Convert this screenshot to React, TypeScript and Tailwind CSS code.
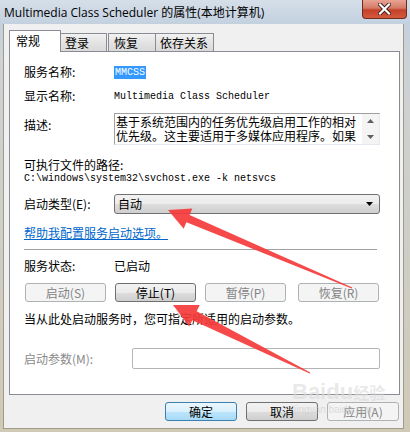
import React from 'react';

const cjk = { fontFamily: '"Noto Sans CJK SC", "Liberation Sans", sans-serif' };
const mono = { fontFamily: '"Liberation Mono", "Noto Sans CJK SC", monospace' };

const Btn: React.FC<{ label: string; disabled?: boolean; focused?: boolean; w?: string }> = ({ label, disabled, focused, w = 'w-[81px]' }) => {
  if (disabled) {
    return (
      <div className={`${w} h-[19px] rounded-[3px] border border-[#adb2b5] bg-[#f4f4f4] text-[#838383] text-[12px] leading-[17px] flex items-center justify-center`}>
        {label}
      </div>
    );
  }
  return (
    <div
      className={`${w} h-[19px] rounded-[3px] border ${focused ? 'border-[#3c7fb1]' : 'border-[#707070]'} text-[12px] leading-[17px] text-black flex items-center justify-center ${
        focused
          ? 'bg-[linear-gradient(#eaf6fd_0%,#d9f0fc_50%,#bee6fd_51%,#a7d9f5_100%)]'
          : 'bg-[linear-gradient(#f2f2f2_0%,#ebebeb_50%,#dddddd_51%,#cfcfcf_100%)]'
      }`}
    >
      {label}
    </div>
  );
};

export default function App() {
  return (
    <div className="relative w-[410px] h-[432px] overflow-hidden bg-[linear-gradient(#d5dfea,#c3d0de_24px,#cdd2d6_60px,#cfc9b6)]" style={cjk}>
      {/* Title bar */}
      <div className="h-[24px] flex items-start justify-between">
        <div className="pl-[4px] pt-[5px] text-[12px] leading-[16px] text-black" style={{ fontFamily: '"Open Sans", "Noto Sans CJK SC", sans-serif' }}>
          Multimedia Class Scheduler 的属性(本地计算机)
        </div>
        <div className="mr-[3px] w-[45px] h-[19px] rounded-b-[4px] border border-t-0 border-[#6d2c22] bg-[linear-gradient(#e8a494_0%,#d57a66_45%,#c4412a_55%,#d4583e_100%)] flex items-center justify-center">
          <svg width="13" height="12" viewBox="0 0 13 12">
            <path d="M2 1.5 L11 10.5 M11 1.5 L2 10.5" stroke="#3b1d19" strokeWidth="4" strokeLinecap="square" />
            <path d="M2 1.5 L11 10.5 M11 1.5 L2 10.5" stroke="#ffffff" strokeWidth="2.2" strokeLinecap="square" />
          </svg>
        </div>
      </div>

      {/* Window body */}
      <div className="ml-[3px] w-[401px] h-[405px] border-l border-r border-b border-[#a09a88] bg-[#f0f0f0] pl-[5px] pt-[7px] flex flex-col">
        {/* Tabs */}
        <div className="flex items-end h-[20px] relative z-10">
          <div className="w-[52px] h-[22px] -mb-[1px] bg-white border border-b-0 border-[#898c95] text-[12px] leading-[20px] pl-[6px]">常规</div>
          <div className="w-[46px] h-[18px] border border-b-0 border-l-0 border-[#898c95] bg-[linear-gradient(#f2f2f2,#e3e3e3_50%,#d9d9d9)] text-[12px] leading-[17px] pl-[4px]">登录</div>
          <div className="w-[48px] h-[18px] ml-[1px] border border-b-0 border-[#898c95] bg-[linear-gradient(#f2f2f2,#e3e3e3_50%,#d9d9d9)] text-[12px] leading-[17px] pl-[5px]">恢复</div>
          <div className="w-[58px] h-[18px] border border-b-0 border-l-0 border-[#898c95] bg-[linear-gradient(#f2f2f2,#e3e3e3_50%,#d9d9d9)] text-[12px] leading-[17px] pl-[4px]">依存关系</div>
        </div>

        {/* Panel */}
        <div className="w-[391px] h-[344px] bg-white border border-[#898c95] pl-[14px] flex flex-col text-[12px] text-black">
          <div className="mt-[12px] h-[16px] flex items-center">
            <span className="w-[90px] leading-[14px]">服务名称:</span>
            <span className="px-[1px] bg-[#3399ff] text-white text-[10px] leading-[13px]" style={mono}>MMCSS</span>
          </div>
          <div className="mt-[8px] h-[16px] flex items-center">
            <span className="w-[90px] leading-[14px]">显示名称:</span>
            <span className="text-[10px] leading-[13px]" style={mono}>Multimedia Class Scheduler</span>
          </div>
          <div className="mt-[9px] h-[32px] flex items-center">
            <span className="w-[90px] leading-[14px] pb-[8px]">描述:</span>
            <div className="w-[266px] h-[32px] border border-[#a0a0a0] border-r-[#e3e9ef] border-b-[#e3e9ef] flex">
              <div className="w-[247px] pl-[1px] pt-[1px] text-[12px] leading-[14px]">
                <div>基于系统范围内的任务优先级启用工作的相对</div>
                <div>优先级。这主要适用于多媒体应用程序。如果</div>
              </div>
              <div className="w-[17px] h-full bg-[#f4f4f4] flex flex-col items-center justify-between py-[5px]">
                <svg width="7" height="4" viewBox="0 0 7 4"><path d="M0 4 L3.5 0 L7 4 Z" fill="#606060" /></svg>
                <svg width="7" height="4" viewBox="0 0 7 4"><path d="M0 0 L3.5 4 L7 0 Z" fill="#606060" /></svg>
              </div>
            </div>
          </div>
          <div className="mt-[13px] h-[13px] leading-[13px]">可执行文件的路径:</div>
          <div className="mt-[1px] h-[13px] leading-[13px] text-[10px]" style={mono}>C:\windows\system32\svchost.exe -k netsvcs</div>
          <div className="mt-[9px] h-[20px] flex items-center">
            <span className="w-[90px] leading-[14px]">启动类型(E):</span>
            <div className="w-[266px] h-[20px] rounded-[3px] border border-[#707070] bg-[linear-gradient(#f2f2f2_0%,#ebebeb_50%,#dddddd_51%,#cfcfcf_100%)] flex items-center justify-between pl-[3px] pr-[6px]">
              <span className="leading-[14px]">自动</span>
              <svg width="7" height="4" viewBox="0 0 7 4"><path d="M0 0 L7 0 L3.5 4 Z" fill="#000" /></svg>
            </div>
          </div>
          <div className="mt-[12px] h-[14px] leading-[14px]">
            <span className="text-[#0066cc] underline">帮助我配置服务启动选项。</span>
          </div>
          <div className="mt-[9px] w-[353px] h-[1px] bg-[#a0a0a0]" />
          <div className="mt-[9px] h-[14px] flex items-center">
            <span className="w-[90px] leading-[14px]">服务状态:</span>
            <span className="leading-[14px]">已启动</span>
          </div>
          <div className="mt-[10px] flex items-center gap-[9px] pl-[1px]">
            <Btn label="启动(S)" disabled />
            <Btn label="停止(T)" />
            <Btn label="暂停(P)" disabled />
            <div className="ml-[3px]"><Btn label="恢复(R)" disabled /></div>
          </div>
          <div className="mt-[10px] h-[14px] leading-[14px]">当从此处启动服务时，您可指定所适用的启动参数。</div>
          <div className="mt-[22px] h-[21px] flex items-center">
            <span className="w-[108px] leading-[14px] text-[#8a8a8a]">启动参数(M):</span>
            <div className="w-[248px] h-[21px] border border-[#b5b5b5] rounded-[2px] bg-white" />
          </div>
        </div>

        {/* Bottom buttons */}
        <div className="mt-[7px] flex justify-end gap-[9px] pr-[4px]">
          <Btn label="确定" focused w="w-[72px]" />
          <Btn label="取消" w="w-[72px]" />
          <Btn label="应用(A)" disabled w="w-[72px]" />
        </div>
      </div>

      {/* Watermark */}
      <div className="absolute left-[292px] top-[381px] text-[22px] leading-[22px] font-bold text-[#dcdcdc] opacity-60 pointer-events-none" style={{ fontFamily: '"Liberation Sans", "Noto Sans CJK SC", sans-serif' }}>
        Baidu<span className="text-[16px]">经验</span>
      </div>
      <div className="absolute left-[294px] top-[405px] text-[10px] leading-[10px] text-[#cccccc] opacity-60 pointer-events-none" style={{ fontFamily: '"Liberation Sans", sans-serif' }}>
        jingyan.baidu.com
      </div>

      {/* Annotation arrows */}
      <svg className="absolute left-0 top-0 pointer-events-none" width="410" height="432" viewBox="0 0 410 432">
        <polygon points="168,210 192.3,208.5 189.6,214.9 352.3,287.4 351.7,288.6 186.4,222.3 183.7,228.7" fill="#f53b3b" fillOpacity="0.92" />
        <polygon points="173,305 199.8,305 196.7,311.2 310.3,372.4 309.7,373.6 192.3,320.2 189.2,326.4" fill="#f53b3b" fillOpacity="0.92" />
      </svg>
    </div>
  );
}
